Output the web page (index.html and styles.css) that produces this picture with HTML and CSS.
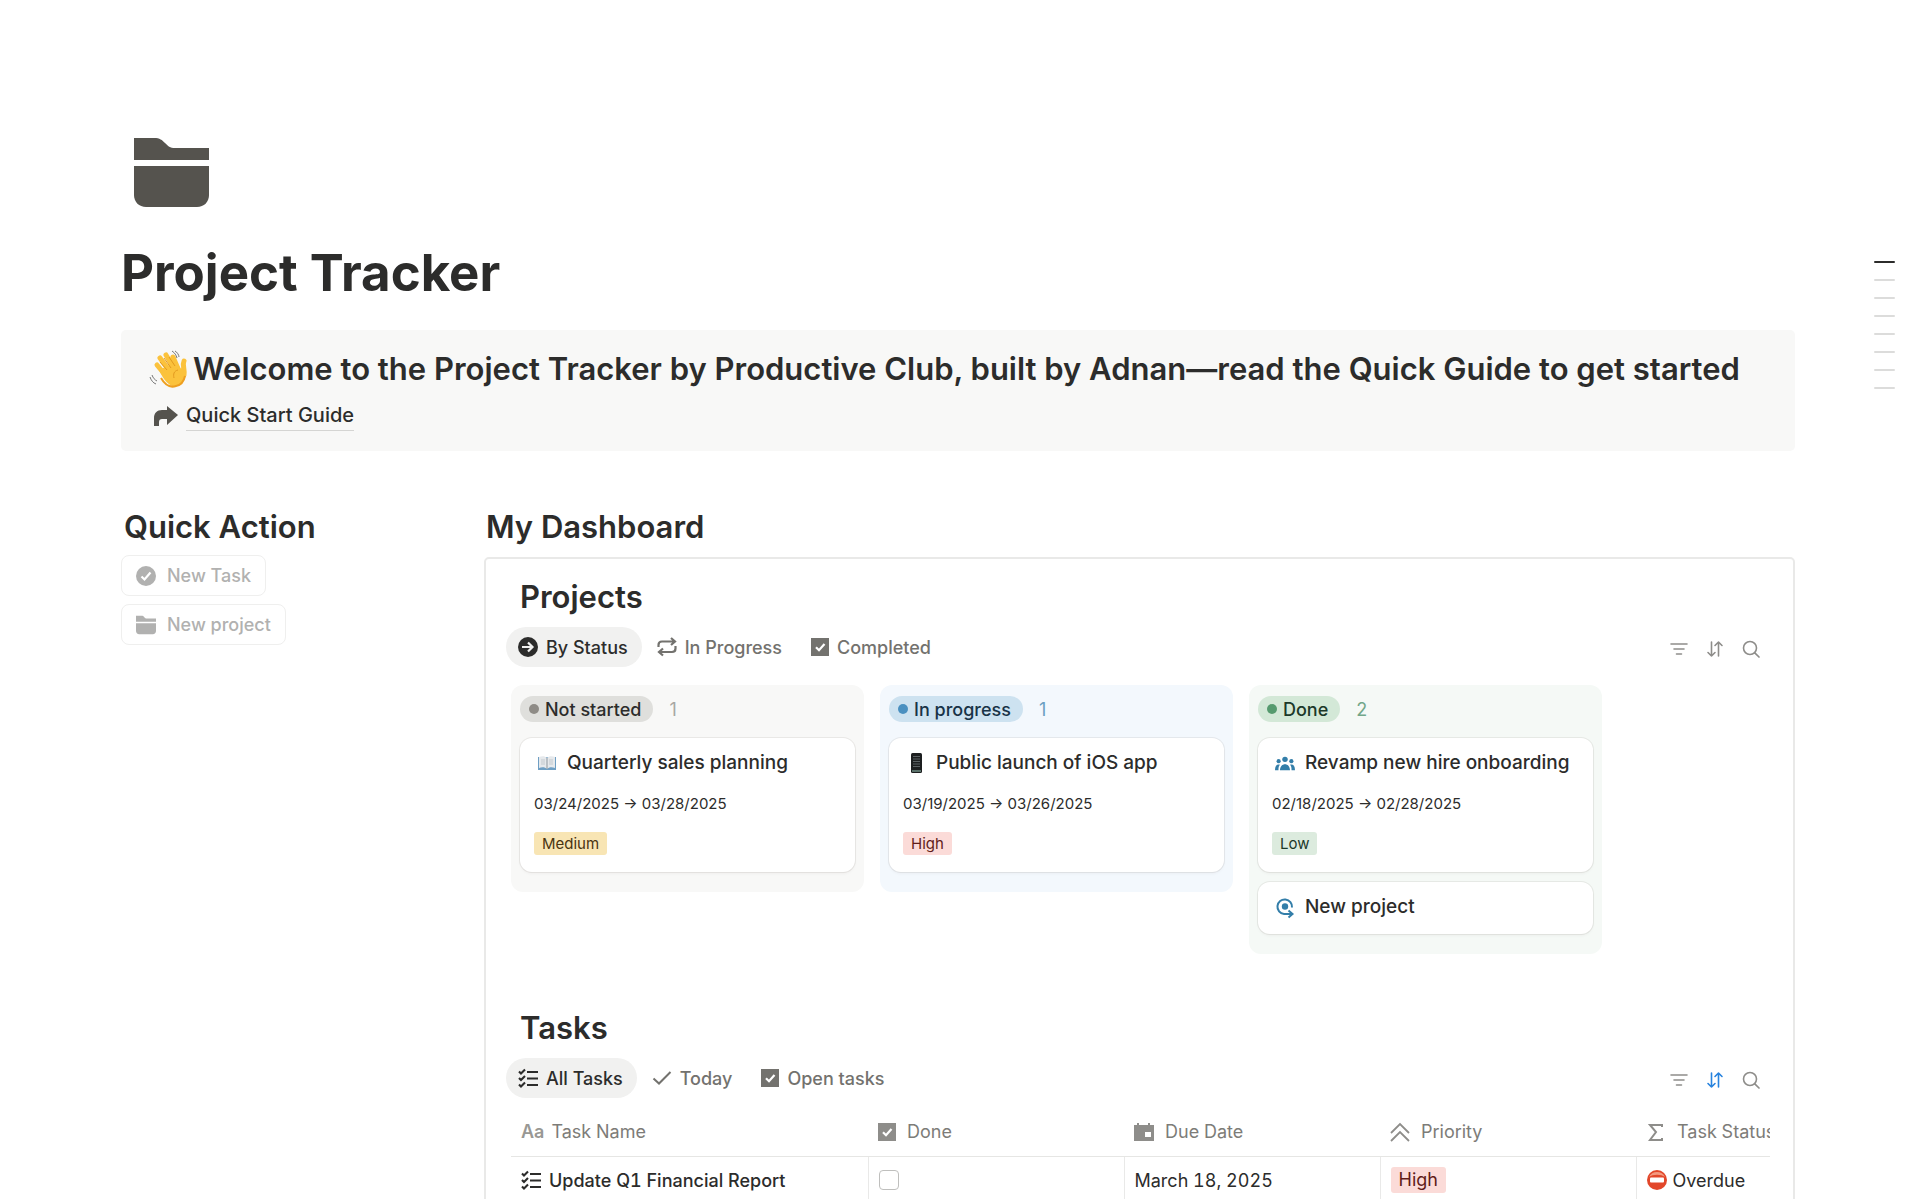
FILE: index.html
```html
<!DOCTYPE html>
<html lang="en">
<head>
    <meta charset="UTF-8">
    <meta name="viewport" content="width=device-width, initial-scale=1.0">
    <title>Project Tracker</title>
    <link rel="stylesheet" href="styles.css">
</head>
<body>
    <!-- Shared icons -->
    <svg class="sprite" aria-hidden="true">
        <symbol id="i-folder" viewBox="0 0 75 69">
            <path d="M0 0h20c6 0 8 2 11 5s5 5 10 5h34v12H0z"/>
            <path d="M0 28h75v29c0 7-5 12-12 12H12C5 69 0 64 0 57z"/>
        </symbol>
        <symbol id="i-checkbox" viewBox="0 0 18 18">
            <path d="M0 0h18v18H0z"/>
            <path d="M5 9.2l3 3L13.5 6" fill="none" stroke="#fff" stroke-width="2.2"/>
        </symbol>
        <symbol id="i-list" viewBox="0 0 20 20">
            <path d="M1 3.5l2 2L7 1.5M1 10l2 2 4-4M1 16.5l2 2 4-4M9 4h11M9 10.500h11M9 17h11" fill="none" stroke="currentColor" stroke-width="2.1"/>
        </symbol>
        <symbol id="i-filter" viewBox="0 0 18 18">
            <path d="M1 4h16M4 9h10M6.5 14h5" fill="none" stroke="currentColor" stroke-width="1.6" stroke-linecap="round"/>
        </symbol>
        <symbol id="i-sort" viewBox="0 0 18 18">
            <path d="M5.5 2v14M2 12.500L5.500 16 9 12.500M12.500 16V2M9 5.500L12.500 2 16 5.500" fill="none" stroke="currentColor" stroke-width="1.6" stroke-linecap="round" stroke-linejoin="round"/>
        </symbol>
        <symbol id="i-search" viewBox="0 0 18 18">
            <path d="M12.800 12.800L17 17" stroke="currentColor" stroke-width="1.7" stroke-linecap="round"/>
            <circle cx="8" cy="8" r="6.500" fill="none" stroke="currentColor" stroke-width="1.6"/>
        </symbol>
    </svg>

    <main class="page">
        <svg class="page-icon"><use href="#i-folder"/></svg>
        <h1>Project Tracker</h1>

        <section class="callout">
            <h2>
                <svg class="wave" viewBox="0 0 38 38" role="img" aria-label="Waving hand">
                    <g fill="none" stroke="#fbc23c" stroke-width="5" stroke-linecap="round">
                        <path d="M8 15l10 12M11 8l11 15M17 5l9 15M24 7l6 14"/>
                        <path d="M35 11c-2 4 1 8 0 14"/>
                    </g>
                    <path d="M10 20l17-8 5 7 3-5c3 9 1 17-5 21-7 4-14-2-20-15z" fill="#fbc23c"/>
                    <path d="M11 12l7 8M15 8l7 10M20 7l6 9M29 20c-4 1-5 4-4 8" fill="none" stroke="#e39a20" stroke-width="1"/>
                    <path d="M12 28c4 7 9 10 15 8 5-1 8-5 9-10" fill="none" stroke="#ee9f20" stroke-width="2"/>
                    <path d="M23 1c3 2 4 4 5 7M26 1c2 1 4 4 4 6M1 27c1 3 3 6 6 7M3 25c1 3 3 5 5 6" fill="none" stroke="#777" stroke-width="1"/>
                </svg>
                Welcome to the Project Tracker by Productive Club, built by Adnan—read the Quick Guide to get started
            </h2>
            <div class="guide">
                <svg viewBox="0 0 24 20"><path d="M13 0l11 9-11 10v-6H8c-2 0-3 1-3 3v4H0V12c0-5 3-8 8-8h5z"/></svg>
                <a href="#guide">Quick Start Guide</a>
            </div>
        </section>

        <div class="layout">
            <aside>
                <h2 class="quick-title">Quick Action</h2>
                <div class="actions">
                    <button class="action">
                        <svg viewBox="0 0 20 20"><circle cx="10" cy="10" r="10"/><path d="M5.500 10.500l3 3 6-7" fill="none" stroke="#fff" stroke-width="2.2"/></svg>
                        New Task
                    </button>
                    <button class="action">
                        <svg><use href="#i-folder"/></svg>
                        New project
                    </button>
                </div>
            </aside>

            <section>
                <h2 class="dashboard-title">My Dashboard</h2>
                <div class="panel">
                    <h2 class="section-title">Projects</h2>
                    <div class="bar">
                        <div class="tabs">
                            <button class="tab active">
                                <svg viewBox="0 0 20 20"><circle cx="10" cy="10" r="10"/><path d="M4 10h10M10 5.500l4.500 4.500-4.500 4.500" fill="none" stroke="#f1f1f0" stroke-width="2.2"/></svg>
                                By Status
                            </button>
                            <button class="tab">
                                <svg viewBox="0 0 20 20"><path d="M1.500 10V8c0-2.500 1-3.500 3.500-3.500h12M14 1l4 3.500L14 8M18.500 9v2.500c0 2.500-1 3.500-3.500 3.500H3M6 11.500L2 15l4 3.500" fill="none" stroke="currentColor" stroke-width="2.2"/></svg>
                                In Progress
                            </button>
                            <button class="tab">
                                <svg class="small"><use href="#i-checkbox"/></svg>
                                Completed
                            </button>
                        </div>
                        <div class="tools">
                            <button class="tool" aria-label="Filter"><svg><use href="#i-filter"/></svg></button>
                            <button class="tool" aria-label="Sort"><svg><use href="#i-sort"/></svg></button>
                            <button class="tool" aria-label="Search"><svg><use href="#i-search"/></svg></button>
                        </div>
                    </div>

                    <div class="board">
                        <div class="column gray">
                            <div class="column-head"><span class="status">Not started</span><span class="count">1</span></div>
                            <article class="card">
                                <h3>
                                    <svg viewBox="0 0 20 20">
                                        <path d="M1 4h18v13H1z" fill="#6f9fc4"/>
                                        <path d="M2 4c3-1 6-1 8 1 2-2 5-2 8-1v11c-3-1-6-1-8 1-2-2-5-2-8-1z" fill="#e6e9ec"/>
                                        <path d="M10 5v11" stroke="#8d979f" fill="none"/>
                                        <path d="M4 7h4M4 9h4M4 11h4M12 7h4M12 9h4M12 11h4" stroke="#c3c9ce" fill="none"/>
                                    </svg>
                                    Quarterly sales planning
                                </h3>
                                <p>03/24/2025 → 03/28/2025</p>
                                <span class="tag medium">Medium</span>
                            </article>
                        </div>
                        <div class="column blue">
                            <div class="column-head"><span class="status">In progress</span><span class="count">1</span></div>
                            <article class="card">
                                <h3>
                                    <svg viewBox="0 0 20 20">
                                        <rect x="5" y="0" width="11" height="20" rx="1.500" fill="#1d1f20"/>
                                        <path d="M7 3.500h7M7 6h7M7 8.500h7M7 11h7M7 13.500h7" stroke="#5b6163" fill="none"/>
                                        <path d="M6 18h9" stroke="#6f8f83" stroke-width="1.5"/>
                                    </svg>
                                    Public launch of iOS app
                                </h3>
                                <p>03/19/2025 → 03/26/2025</p>
                                <span class="tag high">High</span>
                            </article>
                        </div>
                        <div class="column green">
                            <div class="column-head"><span class="status">Done</span><span class="count">2</span></div>
                            <article class="card">
                                <h3>
                                    <svg class="icon-blue" viewBox="0 0 22 20">
                                        <circle cx="11" cy="6" r="3"/><circle cx="4" cy="8" r="2.300"/><circle cx="18" cy="8" r="2.300"/>
                                        <path d="M5.500 18c0-9 11-9 11 0zM0 18c0-5 2-7 5.500-6C4 13.500 3.800 15 3.800 18zM22 18c0-5-2-7-5.500-6 1.500 1.500 1.700 3 1.700 6z"/>
                                    </svg>
                                    Revamp new hire onboarding
                                </h3>
                                <p>02/18/2025 → 02/28/2025</p>
                                <span class="tag low">Low</span>
                            </article>
                            <article class="card">
                                <h3>
                                    <svg class="icon-blue" viewBox="0 0 20 20">
                                        <circle cx="10" cy="9.500" r="3.200"/>
                                        <path d="M17 10.500A7.300 7.300 0 1 0 9 17h8M13.500 13.500l4 3.500-4 3.500" fill="none" stroke="currentColor" stroke-width="2"/>
                                    </svg>
                                    New project
                                </h3>
                            </article>
                        </div>
                    </div>

                    <h2 class="section-title">Tasks</h2>
                    <div class="bar">
                        <div class="tabs">
                            <button class="tab active">
                                <svg><use href="#i-list"/></svg>
                                All Tasks
                            </button>
                            <button class="tab">
                                <svg viewBox="0 0 20 20"><path d="M1.500 10.500l5.500 5L18.500 4" fill="none" stroke="currentColor" stroke-width="2"/></svg>
                                Today
                            </button>
                            <button class="tab">
                                <svg class="small"><use href="#i-checkbox"/></svg>
                                Open tasks
                            </button>
                        </div>
                        <div class="tools">
                            <button class="tool" aria-label="Filter"><svg><use href="#i-filter"/></svg></button>
                            <button class="tool on" aria-label="Sort"><svg><use href="#i-sort"/></svg></button>
                            <button class="tool" aria-label="Search"><svg><use href="#i-search"/></svg></button>
                        </div>
                    </div>

                    <div class="table-wrap">
                        <table>
                            <colgroup><col class="col-name"><col><col><col><col></colgroup>
                            <thead>
                                <tr>
                                    <th><div class="cell name"><span class="aa">Aa</span>Task Name</div></th>
                                    <th><div class="cell"><svg class="small"><use href="#i-checkbox"/></svg>Done</div></th>
                                    <th><div class="cell"><svg viewBox="0 0 20 20"><path fill-rule="evenodd" d="M0 3h3V1h2v2h9V1h2v2h4v16H0zM11 10v5h6v-5z"/></svg>Due Date</div></th>
                                    <th><div class="cell"><svg viewBox="0 0 20 20"><path d="M1 11l9-9 9 9M1 19l9-9 9 9" fill="none" stroke="currentColor" stroke-width="1.8"/></svg>Priority</div></th>
                                    <th><div class="cell"><svg viewBox="0 0 20 20"><path d="M16 5V3H4l6 7-6 8h12v-2" fill="none" stroke="currentColor" stroke-width="2"/></svg>Task Status</div></th>
                                </tr>
                            </thead>
                            <tbody>
                                <tr>
                                    <td><div class="cell task"><svg><use href="#i-list"/></svg>Update Q1 Financial Report</div></td>
                                    <td><div class="cell"><input type="checkbox" aria-label="Update Q1 Financial Report done"></div></td>
                                    <td><div class="cell">March 18, 2025</div></td>
                                    <td><div class="cell"><span class="tag high large">High</span></div></td>
                                    <td><div class="cell overdue">
                                        <svg viewBox="0 0 20 20">
                                            <circle cx="10" cy="10" r="10" fill="#e2472a"/>
                                            <path d="M2 7a9 9 0 0 1 16 0c-4-3-12-3-16 0z" fill="#f39a80"/>
                                            <rect x="3" y="7.500" width="14" height="5" rx="1" fill="#fff"/>
                                        </svg>
                                        Overdue
                                    </div></td>
                                </tr>
                            </tbody>
                        </table>
                    </div>
                </div>
            </section>
        </div>
    </main>

    <!-- Table of contents markers -->
    <nav class="toc" aria-label="Contents">
        <span class="current"></span>
        <span></span>
        <span></span>
        <span></span>
        <span></span>
        <span></span>
        <span></span>
        <span></span>
    </nav>
</body>
</html>
```
FILE: styles.css
```css
* {
    box-sizing: border-box;
}

body {
    margin: 0;
    font-family: Inter, sans-serif;
    font-size: 18px;
    color: #2c2c2b;
    background-color: #fff;
}

h1, h2, h3, p {
    margin: 0;
}

h1 {
    font-size: 51px;
    line-height: 64px;
    font-weight: 700;
    margin-bottom: 25px;
}

h2 {
    font-size: 31px;
    line-height: 40px;
    font-weight: 600;
}

button {
    font-family: inherit;
    font-size: 18px;
    font-weight: 500;
    border: none;
    background: none;
    cursor: pointer;
}

svg {
    display: block;
    flex: none;
    width: 20px;
    height: 20px;
    fill: currentColor;
    overflow: visible;
}

svg.small {
    width: 18px;
    height: 18px;
}

.sprite {
    display: none;
}

.icon-blue {
    color: #337ea9;
}

.page {
    height: 100vh;
    overflow-y: auto;
    scrollbar-width: none;
    padding: 138px 125px 0 121px;
}

.page-icon {
    width: 75px;
    height: 69px;
    margin: 0 0 34px 13px;
    color: #55534e;
}

/* Welcome box */
.callout {
    padding: 19px 28px 20px;
    margin-bottom: 56px;
    background-color: #f8f8f7;
    border-radius: 5px;
}

.callout h2 {
    display: flex;
    align-items: center;
    gap: 6px;
    white-space: nowrap;
}

.wave {
    width: 38px;
    height: 38px;
}

.guide {
    display: flex;
    align-items: center;
    gap: 8px;
    margin-top: 11px;
    padding-left: 5px;
    color: #55534e;
}

.guide svg {
    width: 24px;
}

.guide a {
    font-size: 20px;
    line-height: 30px;
    font-weight: 500;
    color: #2c2c2b;
    text-decoration: none;
    border-bottom: 1px solid #d5d5d3;
}

.layout {
    display: grid;
    grid-template-columns: 316px minmax(0, 1fr);
    gap: 47px;
}

.quick-title {
    padding-left: 3px;
}

.dashboard-title {
    padding-left: 2px;
}

.actions {
    display: flex;
    flex-direction: column;
    align-items: flex-start;
    gap: 8px;
    margin-top: 8px;
}

.action {
    display: flex;
    align-items: center;
    gap: 11px;
    height: 41px;
    padding: 0 14px;
    color: #b1b1b0;
    border: 1px solid #efefee;
    border-radius: 8px;
}

.panel {
    margin-top: 10px;
    padding: 18px 23px 40px 25px;
    border: 2px solid #e9e9e8;
    border-radius: 5px;
}

.section-title {
    padding-left: 9px;
}

.bar {
    display: flex;
    justify-content: space-between;
    align-items: center;
    margin-top: 10px;
}

.tabs {
    display: flex;
    gap: 3px;
    margin-left: -5px;
}

.tab {
    display: flex;
    align-items: center;
    gap: 8px;
    height: 40px;
    padding: 0 14px 0 12px;
    border-radius: 20px;
    color: #73726e;
}

.tab.active {
    color: #2c2c2b;
    background-color: #f1f1f0;
}

.tools {
    display: flex;
    gap: 18px;
    padding: 4px 10px 0 0;
}

.tool {
    padding: 0;
    color: #8e8d8a;
}

.tool svg {
    width: 18px;
    height: 18px;
}

.tool.on {
    color: #2783de;
}

/* Project board */
.board {
    display: flex;
    align-items: flex-start;
    gap: 16px;
    margin: 18px 0 54px;
}

.column {
    flex: 0 0 353px;
    padding: 11px 9px 20px;
    border-radius: 12px;
}

.column-head {
    display: flex;
    align-items: center;
    gap: 16px;
    margin-bottom: 16px;
}

.status {
    display: flex;
    align-items: center;
    gap: 6px;
    height: 26px;
    padding: 0 12px 0 9px;
    border-radius: 13px;
    font-weight: 500;
}

.status::before {
    content: "";
    width: 10px;
    height: 10px;
    border-radius: 50%;
}

.gray {
    background-color: #f8f8f7;
}

.gray .status {
    background-color: #dfdfdc;
}

.gray .status::before {
    background-color: #8e8b86;
}

.gray .count {
    color: #a8a7a3;
}

.blue {
    background-color: #f3f8fd;
}

.blue .status {
    color: #183347;
    background-color: #cde2f0;
}

.blue .status::before {
    background-color: #4a90c0;
}

.blue .count {
    color: #6a9fc2;
}

.green {
    background-color: #f5f9f6;
}

.green .status {
    color: #1c3829;
    background-color: #d3e8d7;
}

.green .status::before {
    background-color: #559a6e;
}

.green .count {
    color: #72a78a;
}

.card {
    padding: 11px 14px 13px;
    background-color: #fff;
    border-radius: 12px;
    box-shadow: 0 0 0 1px rgba(40, 30, 20, 0.07), 0 2px 3px rgba(40, 30, 20, 0.04);
}

.card + .card {
    margin-top: 10px;
}

.card h3 {
    display: flex;
    align-items: center;
    gap: 10px;
    padding-left: 3px;
    font-size: 19px;
    line-height: 28px;
    font-weight: 500;
    white-space: nowrap;
}

.card p {
    margin: 15px 0 16px;
    font-size: 15px;
    line-height: 24px;
}

.tag {
    display: block;
    width: fit-content;
    padding: 0 8px;
    font-size: 15px;
    line-height: 23px;
    border-radius: 3px;
}

.card .tag {
    margin-bottom: 4px;
}

.tag.large {
    font-size: 18px;
    line-height: 26px;
}

.tag.medium {
    color: #4a3411;
    background-color: #f8e5b4;
}

.tag.high {
    color: #611c18;
    background-color: #fbdbd8;
}

.tag.low {
    color: #1c3829;
    background-color: #dcebde;
}

/* Tasks table */
.table-wrap {
    margin-top: 10px;
    overflow: hidden;
}

table {
    table-layout: fixed;
    width: 1381px;
    border-collapse: collapse;
    font-variant-numeric: tabular-nums;
}

.col-name {
    width: 357px;
}

th, td {
    height: 48px;
    padding: 0 10px;
    text-align: left;
}

th {
    font-weight: 400;
    color: #7d7c78;
    border-bottom: 1px solid #e6e6e4;
}

th svg {
    color: #8e8d8a;
}

td + td {
    border-left: 1px solid #e9e9e8;
}

.cell {
    display: flex;
    align-items: center;
    gap: 11px;
    white-space: nowrap;
}

.cell.name {
    gap: 7px;
}

.cell.task {
    gap: 8px;
    font-weight: 500;
}

.cell.overdue {
    gap: 6px;
}

.aa {
    font-weight: 600;
    color: #999894;
}

input[type="checkbox"] {
    appearance: none;
    width: 20px;
    height: 20px;
    margin: 0;
    border: 1px solid #bfbfbd;
    border-radius: 4px;
    background-color: #fff;
}

.toc {
    position: fixed;
    top: 261px;
    right: 25px;
    display: flex;
    flex-direction: column;
    gap: 16px;
}

.toc span {
    width: 21px;
    height: 2px;
    border-radius: 1px;
    background-color: #dcdcdb;
}

.toc .current {
    background-color: #2c2c2b;
}
```
